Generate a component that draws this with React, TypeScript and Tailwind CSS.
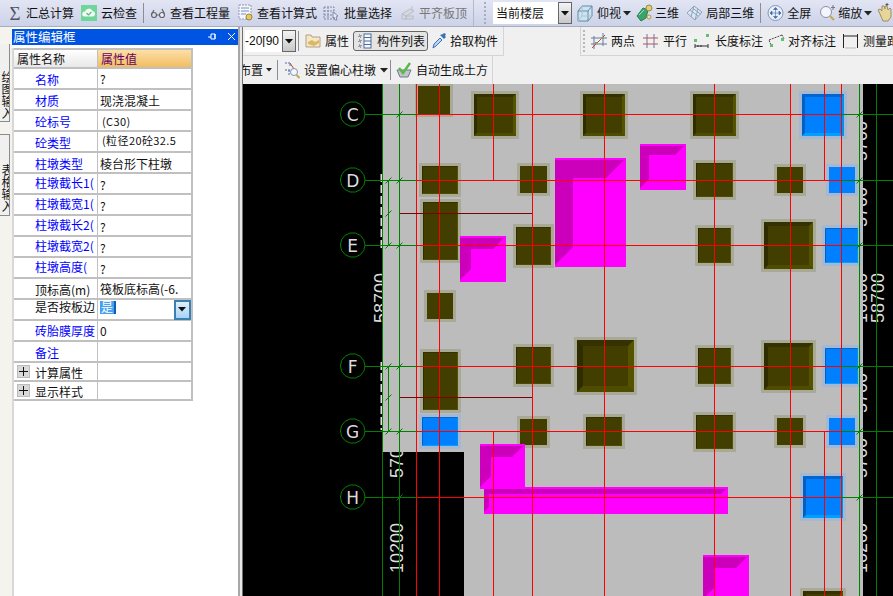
import React from "react";

const Sigma = () => (
  <span className="w-[14px] shrink-0 text-center text-[19px] leading-none text-[#555566] font-['Liberation_Serif',serif]">Σ</span>
);
const IconCloud = () => (
  <svg width="16" height="16" viewBox="0 0 16 16">
    <rect width="16" height="16" fill="#6fd69a" />
    <path d="M3.5 11.5a2.5 2.5 0 0 1 .5-5 4 4 0 0 1 7.5-.5 2.8 2.8 0 0 1 .5 5.500z" fill="#f2fbf4" />
    <path d="M5.500 8l2 2 3-3" stroke="#58b880" strokeWidth="1.200" fill="none" />
  </svg>
);
const IconGlasses = () => (
  <svg width="16" height="16" viewBox="0 0 16 16" fill="none" stroke="#666" strokeWidth="1.200">
    <circle cx="4" cy="10" r="2.500" />
    <circle cx="12" cy="10" r="2.500" fill="#eef" />
    <path d="M6.500 10h3M1.500 9L4 5M14.500 9L12 4" />
  </svg>
);
const IconSheet = () => (
  <svg width="16" height="18" viewBox="0 0 16 18">
    <rect x="1" y="1" width="12" height="14" fill="#f5f6fb" stroke="#8c94b8" strokeDasharray="2 1" />
    <path d="M3 4h8M3 7h8M3 10h5" stroke="#7a90c0" />
    <circle cx="11" cy="13" r="3" fill="#e8c860" stroke="#998844" />
  </svg>
);
const IconBatch = () => (
  <svg width="16" height="18" viewBox="0 0 16 18" fill="none">
    <path d="M1 3h10v12H1zM1 7h10M1 11h10M5 3v12" stroke="#8088a8" strokeDasharray="2 1" />
    <path d="M10 8l5 4-2 1 1 3-2 0-1-3-1 1z" fill="#e8ecf8" stroke="#8088a8" />
  </svg>
);
const IconFlat = () => (
  <svg width="16" height="18" viewBox="0 0 16 18" fill="none" stroke="#b8bcc4">
    <path d="M2 10l8-5 4 2-8 5zM2 10v5h4v-3M6 12h7v3H6z" fill="#d6d8e0" />
    <path d="M12 2v4" />
  </svg>
);
const IconCube = () => (
  <svg width="16" height="18" viewBox="0 0 16 18" fill="#cfe3ee" stroke="#5f8ca8">
    <path d="M1 7l4-5h10v10l-4 5H1z" />
    <path d="M1 7h10v10M11 7l4-5" fill="none" />
    <path d="M1 17l4-5h10M5 2v10" fill="none" stroke="#a8c4d4" />
  </svg>
);
const Icon3D = () => (
  <svg width="17" height="18" viewBox="0 0 17 18">
    <path d="M1 12l6-8 5 2-2 8-5 3z" fill="#3aa56a" stroke="#2a7f50" />
    <path d="M3 11l5-5" stroke="#a6e0be" />
    <circle cx="13" cy="4" r="3" fill="#e0d070" stroke="#998844" />
    <circle cx="13" cy="13" r="2" fill="#f0e6a8" stroke="#aa9950" />
  </svg>
);
const IconLocal3D = () => (
  <svg width="17" height="16" viewBox="0 0 17 16" fill="#dbe6f2" stroke="#8ca4bc">
    <path d="M1 8l7-7 8 6-7 8z" />
    <path d="M4 5l8 6M6.500 3l8 6M8 1l-3 11M12 4l-3 11" fill="none" />
  </svg>
);
const IconFull = () => (
  <svg width="17" height="18" viewBox="0 0 17 18" fill="none">
    <circle cx="8.500" cy="9" r="7.500" fill="#e8eef8" stroke="#8a96ac" />
    <path d="M8.500 4v10M3.500 9h10M8.500 3.500l-2 2h4zM8.500 14.500l-2-2h4zM3 9l2-2v4zM14 9l-2-2v4z" stroke="#3a6ab0" fill="#3a6ab0" strokeWidth="0.600" />
  </svg>
);
const IconZoom = () => (
  <svg width="17" height="18" viewBox="0 0 17 18" fill="none">
    <circle cx="7" cy="8" r="5.500" fill="#f4f6fc" stroke="#8a92a8" />
    <path d="M11 12l4 4" stroke="#c8a850" strokeWidth="2.200" />
    <path d="M14 1v5M12 3.500h4" stroke="#707890" />
  </svg>
);
const IconHand = () => (
  <svg width="16" height="20" viewBox="0 0 16 20">
    <path d="M3 11L1 7l2-1 2 2V3l2 0 1 3V3h2l1 4 2-2 1 1v8l-3 4H6z" fill="#e8d59c" stroke="#9c9060" />
    <path d="M10 0v3M8.500 1.500h3" stroke="#555" />
  </svg>
);
const Caret = () => (
  <svg width="8" height="5" viewBox="0 0 8 5"><path d="M0 0h8L4 4.500z" fill="#222" /></svg>
);
const SmallCaret = () => (
  <svg width="6" height="4" viewBox="0 0 6 4"><path d="M0 0h6L3 3.500z" fill="#222" /></svg>
);
const Sep = ({ c }: { c: string }) => <div className={`w-px h-[20px] shrink-0 bg-[#8c8c94] ${c}`} />;

const IconFolder = () => (
  <svg width="16" height="16" viewBox="0 0 16 16">
    <path d="M1 2h5l1 2h8v10H1z" fill="#f6e6c4" stroke="#b0a080" />
    <path d="M3 9l4-2 3 2 4-2v3l-5 3-6-2z" fill="#d8b868" />
  </svg>
);
const IconList = () => (
  <svg width="14" height="16" viewBox="0 0 14 16">
    <path d="M1 2h2v2H1zM1 7h2v2H1zM1 12h2v2H1z" fill="none" stroke="#555" strokeDasharray="1 1" />
    <rect x="6" y="1" width="7" height="14" fill="#f6f8ff" stroke="#4c6c9c" />
    <path d="M6 4.500h7M6 8h7M6 11.500h7" stroke="#4c6c9c" />
  </svg>
);
const IconPick = () => (
  <svg width="16" height="18" viewBox="0 0 16 18">
    <path d="M2 16l1-4 6-6 2 2-6 6z" fill="#bcd4f0" stroke="#3a70b8" />
    <path d="M9 3l4 4 2-2-1-1 1-2-2-1-1 1z" fill="#3a70b8" />
  </svg>
);
const IconOffset = () => (
  <svg width="16" height="18" viewBox="0 0 16 18" fill="none">
    <path d="M1 2h5v4M5 14V9M1 9h7" stroke="#3a70b8" strokeDasharray="2 1" />
    <path d="M6 2l4 6" stroke="#c04040" />
    <circle cx="10" cy="11" r="3.500" fill="#f4f6fc" stroke="#8a92a8" />
    <path d="M12.500 14l3 3" stroke="#c8a850" strokeWidth="2" />
  </svg>
);
const IconAuto = () => (
  <svg width="16" height="18" viewBox="0 0 16 18" fill="none">
    <path d="M1 9h14l-3 7H4z" fill="#c0c4cc" stroke="#707888" />
    <path d="M3 7l4 5 7-10" stroke="#58b848" strokeWidth="2.400" />
  </svg>
);
const IconTwoPt = () => (
  <svg width="16" height="16" viewBox="0 0 16 16" fill="none" stroke="#6878a8">
    <path d="M3 3v13M12 0v13M0 5h16M0 11h16" />
    <path d="M1 15L14 2" stroke="#d04040" />
    <rect x="4" y="9" width="2" height="2" fill="#60b860" stroke="none" />
    <rect x="10" y="4" width="2" height="2" fill="#60b860" stroke="none" />
  </svg>
);
const IconPar = () => (
  <svg width="15" height="16" viewBox="0 0 15 16" fill="none">
    <path d="M4 1v14M11 1v14" stroke="#6878a8" />
    <path d="M0 5h15M0 11h15" stroke="#c05050" />
  </svg>
);
const IconLen = () => (
  <svg width="16" height="16" viewBox="0 0 16 16" fill="none">
    <rect x="0" y="6" width="3" height="3" fill="#60c070" />
    <rect x="12" y="1" width="3" height="3" fill="#60c070" />
    <path d="M1 11v4M14 11v4M1 13h13" stroke="#333" />
    <path d="M3 13h2M6 13h2" stroke="#333" />
  </svg>
);
const IconAlign = () => (
  <svg width="17" height="16" viewBox="0 0 17 16" fill="none">
    <path d="M1 7l13-5M3 12L1 7M16 6l-2-4" stroke="#444" strokeDasharray="2 1" />
    <rect x="2" y="11" width="3" height="3" fill="#60c070" />
    <rect x="13" y="5" width="3" height="3" fill="#60c070" />
  </svg>
);
const IconMeasure = () => (
  <svg width="15" height="16" viewBox="0 0 15 16" fill="none" stroke="#222">
    <path d="M.5 1v14M14.500 1v14M.5 3h14" strokeWidth="1" />
    <path d="M2 15h11" stroke="#bbb" />
  </svg>
);

const Tool = ({ icon, text, c = "", gap = "gap-[4px]", gray = false }: { icon?: React.ReactNode; text: string; c?: string; gap?: string; gray?: boolean }) => (
  <div className={`flex items-center shrink-0 ${gap} ${c}`}>
    {icon}
    <span className={`whitespace-nowrap text-[12px] leading-none ${gray ? "text-[#777]" : "text-[#111]"}`}>{text}</span>
  </div>
);

const DropBtn = () => (
  <div className="w-[14px] h-full border border-[#666] bg-gradient-to-b from-[#f4f4f4] to-[#c8c8c8] flex items-center justify-center shrink-0">
    <svg width="8" height="5" viewBox="0 0 8 5"><path d="M0 0h8L4 4.500z" fill="#111" /></svg>
  </div>
);

type Row = { n: string; v?: React.ReactNode; blue?: boolean; h?: string; plus?: boolean; vc?: string; lc?: string };
const Q = "?";
const rows: Row[] = [
  { n: "名称", v: Q, blue: true, lc: "pt-[3px]", vc: "pt-[1px]" },
  { n: "材质", v: "现浇混凝土", blue: true, lc: "pt-[3px]", vc: "pt-[3px]" },
  { n: "砼标号", v: <span className="pl-[2px] tracking-[0.4px] text-[11px]">(C30)</span>, blue: true, lc: "pt-[3px]", vc: "pt-[1px]" },
  { n: "砼类型", v: <span className="pl-[2px] tracking-[0.4px] text-[11px]">(粒径20砼32.5</span>, blue: true, lc: "pt-[3px]", vc: "pb-[2px]" },
  { n: "柱墩类型", v: "棱台形下柱墩", blue: true, lc: "pt-[3px]", vc: "pt-[2px]" },
  { n: "柱墩截长1(", v: Q, blue: true, lc: "pb-[2px]", vc: "pt-[3px]" },
  { n: "柱墩截宽1(", v: Q, blue: true, lc: "pb-[2px]", vc: "pt-[3px]" },
  { n: "柱墩截长2(", v: Q, blue: true, lc: "pb-[2px]", vc: "pt-[3px]" },
  { n: "柱墩截宽2(", v: Q, blue: true, lc: "pb-[2px]", vc: "pt-[3px]" },
  { n: "柱墩高度(", v: Q, blue: true, lc: "pb-[2px]", vc: "pt-[3px]" },
  { n: "顶标高(m)", v: "筏板底标高(-6.", lc: "pt-[3px]" },
];

const Cell = ({ r }: { r: Row }) => (
  <div className={`flex border-b-2 border-[#c0c0c0] ${r.h ?? "h-[21px]"}`}>
    <div className={`w-[84px] shrink-0 border-r border-[#c0c0c0] flex items-center relative pl-[21px] ${r.lc ?? ""}`}>
      {r.plus && (
        <div className="absolute left-[3px] top-[2px] w-[13px] h-[13px] bg-[#d8d8d8] border border-[#bbb] flex items-center justify-center">
          <svg width="9" height="9" viewBox="0 0 9 9"><path d="M4.500 0v9M0 4.500h9" stroke="#111" /></svg>
        </div>
      )}
      <span className={`whitespace-nowrap text-[12px] leading-none ${r.blue ? "text-[#0000ff]" : "text-[#111]"}`}>{r.n}</span>
    </div>
    <div className={`flex-1 flex items-center pl-[2px] text-[12px] leading-none text-[#111] whitespace-nowrap overflow-hidden ${r.vc ?? ""}`}>{r.v}</div>
  </div>
);

const cols = [
  { x: 418, y: 86, w: 32, h: 28, t: "d", b: 0 },
  { x: 474, y: 94, w: 42, h: 42, t: "d", b: 3 },
  { x: 583, y: 94, w: 42, h: 42, t: "d", b: 3 },
  { x: 693, y: 94, w: 43, h: 42, t: "d", b: 3 },
  { x: 802, y: 94, w: 42, h: 42, t: "b", b: 3 },
  { x: 422, y: 166, w: 36, h: 28, t: "d", b: 1 },
  { x: 520, y: 166, w: 27, h: 27, t: "d", b: 0 },
  { x: 696, y: 163, w: 37, h: 34, t: "d", b: 1 },
  { x: 777, y: 167, w: 26, h: 26, t: "d", b: 0 },
  { x: 829, y: 167, w: 26, h: 26, t: "b", b: 0 },
  { x: 423, y: 202, w: 35, h: 58, t: "d", b: 1 },
  { x: 516, y: 227, w: 35, h: 38, t: "d", b: 1 },
  { x: 698, y: 228, w: 33, h: 35, t: "d", b: 1 },
  { x: 764, y: 222, w: 49, h: 47, t: "d", b: 4 },
  { x: 825, y: 228, w: 33, h: 35, t: "b", b: 1 },
  { x: 427, y: 293, w: 26, h: 26, t: "d", b: 0 },
  { x: 423, y: 352, w: 35, h: 58, t: "d", b: 1 },
  { x: 516, y: 347, w: 35, h: 37, t: "d", b: 1 },
  { x: 577, y: 340, w: 57, h: 52, t: "d", b: 6 },
  { x: 698, y: 348, w: 33, h: 36, t: "d", b: 1 },
  { x: 764, y: 343, w: 49, h: 47, t: "d", b: 4 },
  { x: 825, y: 348, w: 33, h: 36, t: "b", b: 1 },
  { x: 422, y: 417, w: 36, h: 29, t: "b", b: 1 },
  { x: 520, y: 419, w: 27, h: 26, t: "d", b: 0 },
  { x: 586, y: 417, w: 36, h: 29, t: "d", b: 1 },
  { x: 696, y: 415, w: 37, h: 34, t: "d", b: 1 },
  { x: 777, y: 418, w: 26, h: 27, t: "d", b: 0 },
  { x: 829, y: 418, w: 26, h: 27, t: "b", b: 0 },
  { x: 803, y: 476, w: 40, h: 42, t: "b", b: 3 },
  { x: 803, y: 591, w: 40, h: 42, t: "d", b: 3 },
];
const pinks = [
  { x: 555, y: 158, w: 71, h: 109, b: 18 },
  { x: 460, y: 236, w: 46, h: 46, b: 11 },
  { x: 640, y: 144, w: 46, h: 46, b: 9 },
  { x: 480, y: 444, w: 45, h: 45, b: 11 },
  { x: 484, y: 487, w: 244, h: 27, b: 5 },
  { x: 703, y: 555, w: 46, h: 46, b: 11 },
];
const axes = [
  { l: "C", y: 114 },
  { l: "D", y: 180 },
  { l: "E", y: 245 },
  { l: "F", y: 366 },
  { l: "G", y: 431 },
  { l: "H", y: 497 },
];
const ngon = (cx: number, cy: number, r: number) =>
  Array.from({ length: 14 }, (_, i) => {
    const a = (i / 14) * Math.PI * 2;
    return `${(cx + r * Math.cos(a)).toFixed(1)},${(cy + r * Math.sin(a)).toFixed(1)}`;
  }).join(" ");

const Vtext = ({ x, y, s, size = 18 }: { x: number; y: number; s: string; size?: number }) => (
  <text transform={`translate(${x} ${y}) rotate(-90)`} fontSize={size} fill="#dcdcdc" fontFamily="'Liberation Sans', sans-serif">
    {s}
  </text>
);

const Canvas = () => (
  <svg width="650" height="512" viewBox="243 84 650 512" className="block shrink-0">
    <rect x="243" y="84" width="650" height="512" fill="#000" />
    <Vtext x={387} y={323} s="58700" />
    <Vtext x={403} y={478} s="5700" />
    <Vtext x={403} y={573} s="10200" />
    <Vtext x={867} y={161} s="5700" />
    <Vtext x={867} y={227} s="5700" />
    <Vtext x={867} y={323} s="10800" />
    <Vtext x={867} y={413} s="5700" />
    <Vtext x={867} y={478} s="5700" />
    <Vtext x={867} y={573} s="10200" />
    <Vtext x={884} y={323} s="58700" />
    <path d="M383 84H863V596H464V452H383Z" fill="#bcbcbc" />
    <path d="M381.500 174V250M381.500 362V430" stroke="#e0e0e0" strokeWidth="2" strokeDasharray="8 3" />
    {cols.map((c, i) => {
      const { x, y, w, h, b } = c;
      const blue = c.t === "b";
      const x2 = x + w, y2 = y + h;
      return (
        <g key={i} shapeRendering="crispEdges">
          <rect x={x - 3} y={y - 3} width={w + 6} height={h + 6} fill={blue ? "#a4b8d4" : "#a9a998"} />
          <rect x={x} y={y} width={w} height={h} fill={blue ? "#0080ff" : "#413e00"} />
          {b > 0 && (
            <g shapeRendering="auto">
              <polygon points={`${x},${y} ${x2},${y} ${x2 - b},${y + b} ${x + b},${y + b}`} fill={blue ? "#0066cc" : "#343200"} />
              <polygon points={`${x},${y} ${x + b},${y + b} ${x + b},${y2 - b} ${x},${y2}`} fill={blue ? "#0060c0" : "#2f2d00"} />
              <polygon points={`${x},${y2} ${x + b},${y2 - b} ${x2 - b},${y2 - b} ${x2},${y2}`} fill={blue ? "#00a0ff" : "#4e4c00"} />
              <polygon points={`${x2},${y} ${x2},${y2} ${x2 - b},${y2 - b} ${x2 - b},${y + b}`} fill={blue ? "#0090ee" : "#555300"} />
            </g>
          )}
        </g>
      );
    })}
    {pinks.map((p, i) => {
      const { x, y, w, h, b } = p;
      const t = y + 2, x2 = x + w - 2, y2 = y + h;
      return (
        <g key={i}>
          <rect x={x} y={y} width={w} height={h} fill="#ff00ff" shapeRendering="crispEdges" />
          <polygon
            points={`${x},${t} ${x2},${t} ${x2 - b},${t + b} ${x + b},${t + b} ${x + b},${y2 - b - 2} ${x},${y2 - 2}`}
            fill="#cc00bb"
          />
        </g>
      );
    })}
    <g shapeRendering="crispEdges" strokeWidth="1">
      <path d="M416.500 84V596M439.500 84V596M532.500 84V596M604.500 84V596M714.500 84V596M790.500 84V596M841.500 84V596M493.500 84V180M493.500 431V596M824.500 84V180M824.500 431V596" stroke="#ff0000" />
      <path d="M399 213.500H532M399 397.500H532" stroke="#800000" />
      <path d="M382.500 84V596M399.500 84V596M859.500 84V596M876.500 84V596M388.500 180V245M388.500 366V431" stroke="#008000" />
      {axes.map((a) => (
        <g key={a.l}>
          <path d={`M365 ${a.y + 0.5}H417`} stroke="#008000" />
          <path d={`M417 ${a.y + 0.5}H841`} stroke="#ff0000" />
          <path d={`M841 ${a.y + 0.5}H893`} stroke="#008000" />
        </g>
      ))}
    </g>
    {axes.map((a) => (
      <g key={a.l}>
        <polygon points={ngon(352.7, a.y, 12.3)} fill="#000" stroke="#008000" />
        <text x={352.7} y={a.y + 6.500} textAnchor="middle" fontSize="17" fill="#dcdcdc" fontFamily="'DejaVu Sans', sans-serif">{a.l}</text>
        <path d={`M396.500 ${a.y + 3.500}l6-6M856.500 ${a.y + 3.500}l6-6`} stroke="#008000" />
        {a.l !== "C" && a.l !== "H" && <path d={`M385.500 ${a.y + 3.500}l6-6`} stroke="#008000" />}
      </g>
    ))}
    <path d="M385.500 216.500l6-6M385.500 400.500l6-6" stroke="#008000" />
  </svg>
);

export default function App() {
  return (
    <div className="w-[893px] h-[596px] overflow-hidden flex flex-col bg-[#f0f0f0] font-['Noto_Sans_CJK_SC','Noto_Sans',sans-serif]">
      <div className="h-[27px] shrink-0 flex items-center bg-gradient-to-b from-[#e2e5f3] to-[#ccd2e8] border-b border-[#a8acbc] overflow-hidden">
        <div className="ml-[8px] shrink-0 flex"><Sigma /></div>
        <Tool c="ml-[4px]" text="汇总计算" />
        <Tool c="ml-[7px]" icon={<IconCloud />} text="云检查" />
        <Sep c="ml-[6px]" />
        <Tool c="ml-[6px]" icon={<IconGlasses />} text="查看工程量" />
        <Tool c="ml-[8px]" gap="gap-[3px]" icon={<IconSheet />} text="查看计算式" />
        <Tool c="ml-[6px]" gap="gap-[5px]" icon={<IconBatch />} text="批量选择" />
        <Tool c="ml-[8px]" gap="gap-[3px]" icon={<IconFlat />} text="平齐板顶" gray />
        <div className="ml-[6px] w-px h-full bg-[#b4b8c8] shrink-0" />
        <div className="ml-[10px] w-[2px] h-[22px] shrink-0 border-l-2 border-dotted border-[#a8acbc]" />
        <div className="ml-[7px] w-[79px] h-[22px] shrink-0 flex bg-white pl-[3px] items-center">
          <span className="flex-1 text-[12px] leading-none text-[#111] whitespace-nowrap">当前楼层</span>
          <DropBtn />
        </div>
        <Tool c="ml-[5px]" icon={<IconCube />} text="仰视" />
        <div className="ml-[2px] shrink-0 flex"><Caret /></div>
        <Tool c="ml-[5px]" gap="gap-[2px]" icon={<Icon3D />} text="三维" />
        <Tool c="ml-[7px]" gap="gap-[3px]" icon={<IconLocal3D />} text="局部三维" />
        <Sep c="ml-[6px]" />
        <Tool c="ml-[6px]" gap="gap-[3px]" icon={<IconFull />} text="全屏" />
        <Tool c="ml-[8px]" gap="gap-[2px]" icon={<IconZoom />} text="缩放" />
        <div className="ml-[2px] shrink-0 flex"><Caret /></div>
        <div className="ml-[5px] shrink-0 flex"><IconHand /></div>
      </div>

      <div className="flex-1 flex min-h-0">
        <div className="w-[12px] shrink-0 bg-[#f5f3ee] flex flex-col pt-[18px]">
          <div className="w-[10px] h-[78px] mt-[-1px] bg-[#f0f0f0] border-r border-b border-[#8c8c8c] overflow-hidden flex justify-end items-end">
            <span className="[writing-mode:vertical-rl] text-[12px] leading-[14px] text-[#111] mr-[-5px] mb-[2px] whitespace-nowrap">绘图输入</span>
          </div>
          <div className="w-[10px] h-[82px] mt-[12px] bg-[#f0f0f0] border-t border-r border-b border-[#8c8c8c] overflow-hidden flex justify-end items-end">
            <span className="[writing-mode:vertical-rl] text-[12px] leading-[14px] text-[#111] mr-[-5px] mb-[3px] whitespace-nowrap">表格输入</span>
          </div>
        </div>

        <div className="w-[228px] shrink-0 bg-white border-r-2 border-[#a8a8a8] flex flex-col pt-[2px]">
          <div className="h-[16px] shrink-0 bg-[#0054e3] flex items-center pl-[1px] pt-[1px] relative">
            <span className="text-[12.500px] leading-none text-white whitespace-nowrap">属性编辑框</span>
            <svg className="absolute left-[196px] top-[3px]" width="10" height="10" viewBox="0 0 10 10"><path d="M3 2h4v5H3zM0 5h3M7 2v5" stroke="#fff" fill="none" /></svg>
            <svg className="absolute left-[215px] top-[3px]" width="9" height="9" viewBox="0 0 9 9"><path d="M1 1l7 7M8 1L1 8" stroke="#fff" /></svg>
          </div>
          <div className="flex-1 flex min-h-0 pt-[3px]">
            <div className="w-[2px] h-full bg-[#d8d8d8] shrink-0" />
            <div className="w-[178.500px] shrink-0">
              <div className="flex h-[21px] border-y-2 border-[#c0c0c0] border-r-2">
                <div className="w-[84px] shrink-0 border-r border-[#c0c0c0] bg-gradient-to-b from-white to-[#e8e8e8] flex items-center pl-[3px] pt-[1px] text-[12px] leading-none text-[#111] whitespace-nowrap">属性名称</div>
                <div className="flex-1 bg-gradient-to-b from-[#fcdfa8] to-[#f2bd5e] flex items-center pl-[3px] pt-[1px] text-[12px] leading-none text-[#660066] whitespace-nowrap">属性值</div>
              </div>
              <div className="border-r-2 border-[#c0c0c0]">
                {rows.map((r) => <Cell key={r.n} r={r} />)}
                <div className="flex border-b-2 border-[#c0c0c0] h-[21px]">
                  <div className="w-[84px] shrink-0 border-r border-[#c0c0c0] flex items-center pl-[21px] pb-[5px] text-[12px] leading-none text-[#111] whitespace-nowrap">是否按板边</div>
                  <div className="flex-1 flex items-center pl-[2px] justify-between">
                    <span className="bg-[#4aa0f0] text-white text-[12px] leading-none h-[13px] px-px mb-[4px] border-r-2 border-[#1060b0]">是</span>
                    <div className="w-[17px] h-[20px] border-2 border-[#3a80b0] bg-gradient-to-b from-[#e0f0fc] to-[#a8d4f4] flex items-center justify-center">
                      <svg width="8" height="5" viewBox="0 0 8 5"><path d="M0 0h8L4 4.500z" fill="#111" /></svg>
                    </div>
                  </div>
                </div>
                <Cell r={{ n: "砖胎膜厚度", v: "0", blue: true, vc: "pt-[1px]" }} />
                <Cell r={{ n: "备注", v: "", blue: true, lc: "pt-[3px]" }} />
                <Cell r={{ n: "计算属性", v: "", h: "h-[19px]", plus: true, lc: "pt-[3px]" }} />
                <Cell r={{ n: "显示样式", v: "", h: "h-[19px]", plus: true, lc: "pt-[3px]" }} />
              </div>
            </div>
          </div>
        </div>

        <div className="w-[3px] shrink-0 bg-[#e8e8e8] border-r border-[#707070]" />

        <div className="flex-1 min-w-0 flex flex-col">
          <div className="h-[29px] shrink-0 flex">
            <div className="w-[261px] shrink-0 flex items-center border-r border-b border-[#d4d4d4]">
              <div className="ml-[2px] w-[51px] h-[22px] shrink-0 flex bg-white items-center overflow-hidden">
                <span className="w-[37px] shrink-0 text-[12px] leading-none text-[#111] overflow-hidden whitespace-nowrap font-['Liberation_Sans',sans-serif]">-20[90</span>
                <DropBtn />
              </div>
              <Sep c="ml-[2px]" />
              <Tool c="ml-[6px]" icon={<IconFolder />} text="属性" />
              <div className="ml-[4px] w-[75px] h-[20px] shrink-0 flex items-center pl-[4px] gap-[5px] rounded-[3px] border border-[#666] bg-[#e4e4e4]">
                <IconList />
                <span className="whitespace-nowrap text-[12px] leading-none text-[#111]">构件列表</span>
              </div>
              <Tool c="ml-[3px]" gap="gap-[3px]" icon={<IconPick />} text="拾取构件" />
            </div>
            <div className="ml-[76px] flex-1 flex items-center border-b border-l border-[#d4d4d4] overflow-hidden">
              <div className="ml-[2px] w-[2px] h-[22px] shrink-0 border-l-2 border-dotted border-[#b8b8b8]" />
              <Tool c="ml-[6px]" icon={<IconTwoPt />} text="两点" />
              <Tool c="ml-[8px]" gap="gap-[5px]" icon={<IconPar />} text="平行" />
              <Tool c="ml-[7px]" gap="gap-[5px]" icon={<IconLen />} text="长度标注" />
              <Tool c="ml-[5px]" gap="gap-[3px]" icon={<IconAlign />} text="对齐标注" />
              <Tool c="ml-[7px]" gap="gap-[5px]" icon={<IconMeasure />} text="测量距离" />
            </div>
          </div>
          <div className="h-[28px] shrink-0 flex">
            <div className="w-[250px] shrink-0 flex items-center border-r border-[#d4d4d4] overflow-hidden">
              <span className="w-[20px] shrink-0 overflow-hidden flex justify-end text-[12px] leading-none text-[#111] whitespace-nowrap">布置</span>
              <div className="ml-[3px] shrink-0 flex"><SmallCaret /></div>
              <Sep c="ml-[5px]" />
              <Tool c="ml-[6px]" icon={<IconOffset />} text="设置偏心柱墩" />
              <div className="ml-[4px] shrink-0 flex"><Caret /></div>
              <Sep c="ml-[2px]" />
              <Tool c="ml-[5px]" icon={<IconAuto />} text="自动生成土方" />
            </div>
          </div>
          <Canvas />
        </div>
      </div>
    </div>
  );
}
